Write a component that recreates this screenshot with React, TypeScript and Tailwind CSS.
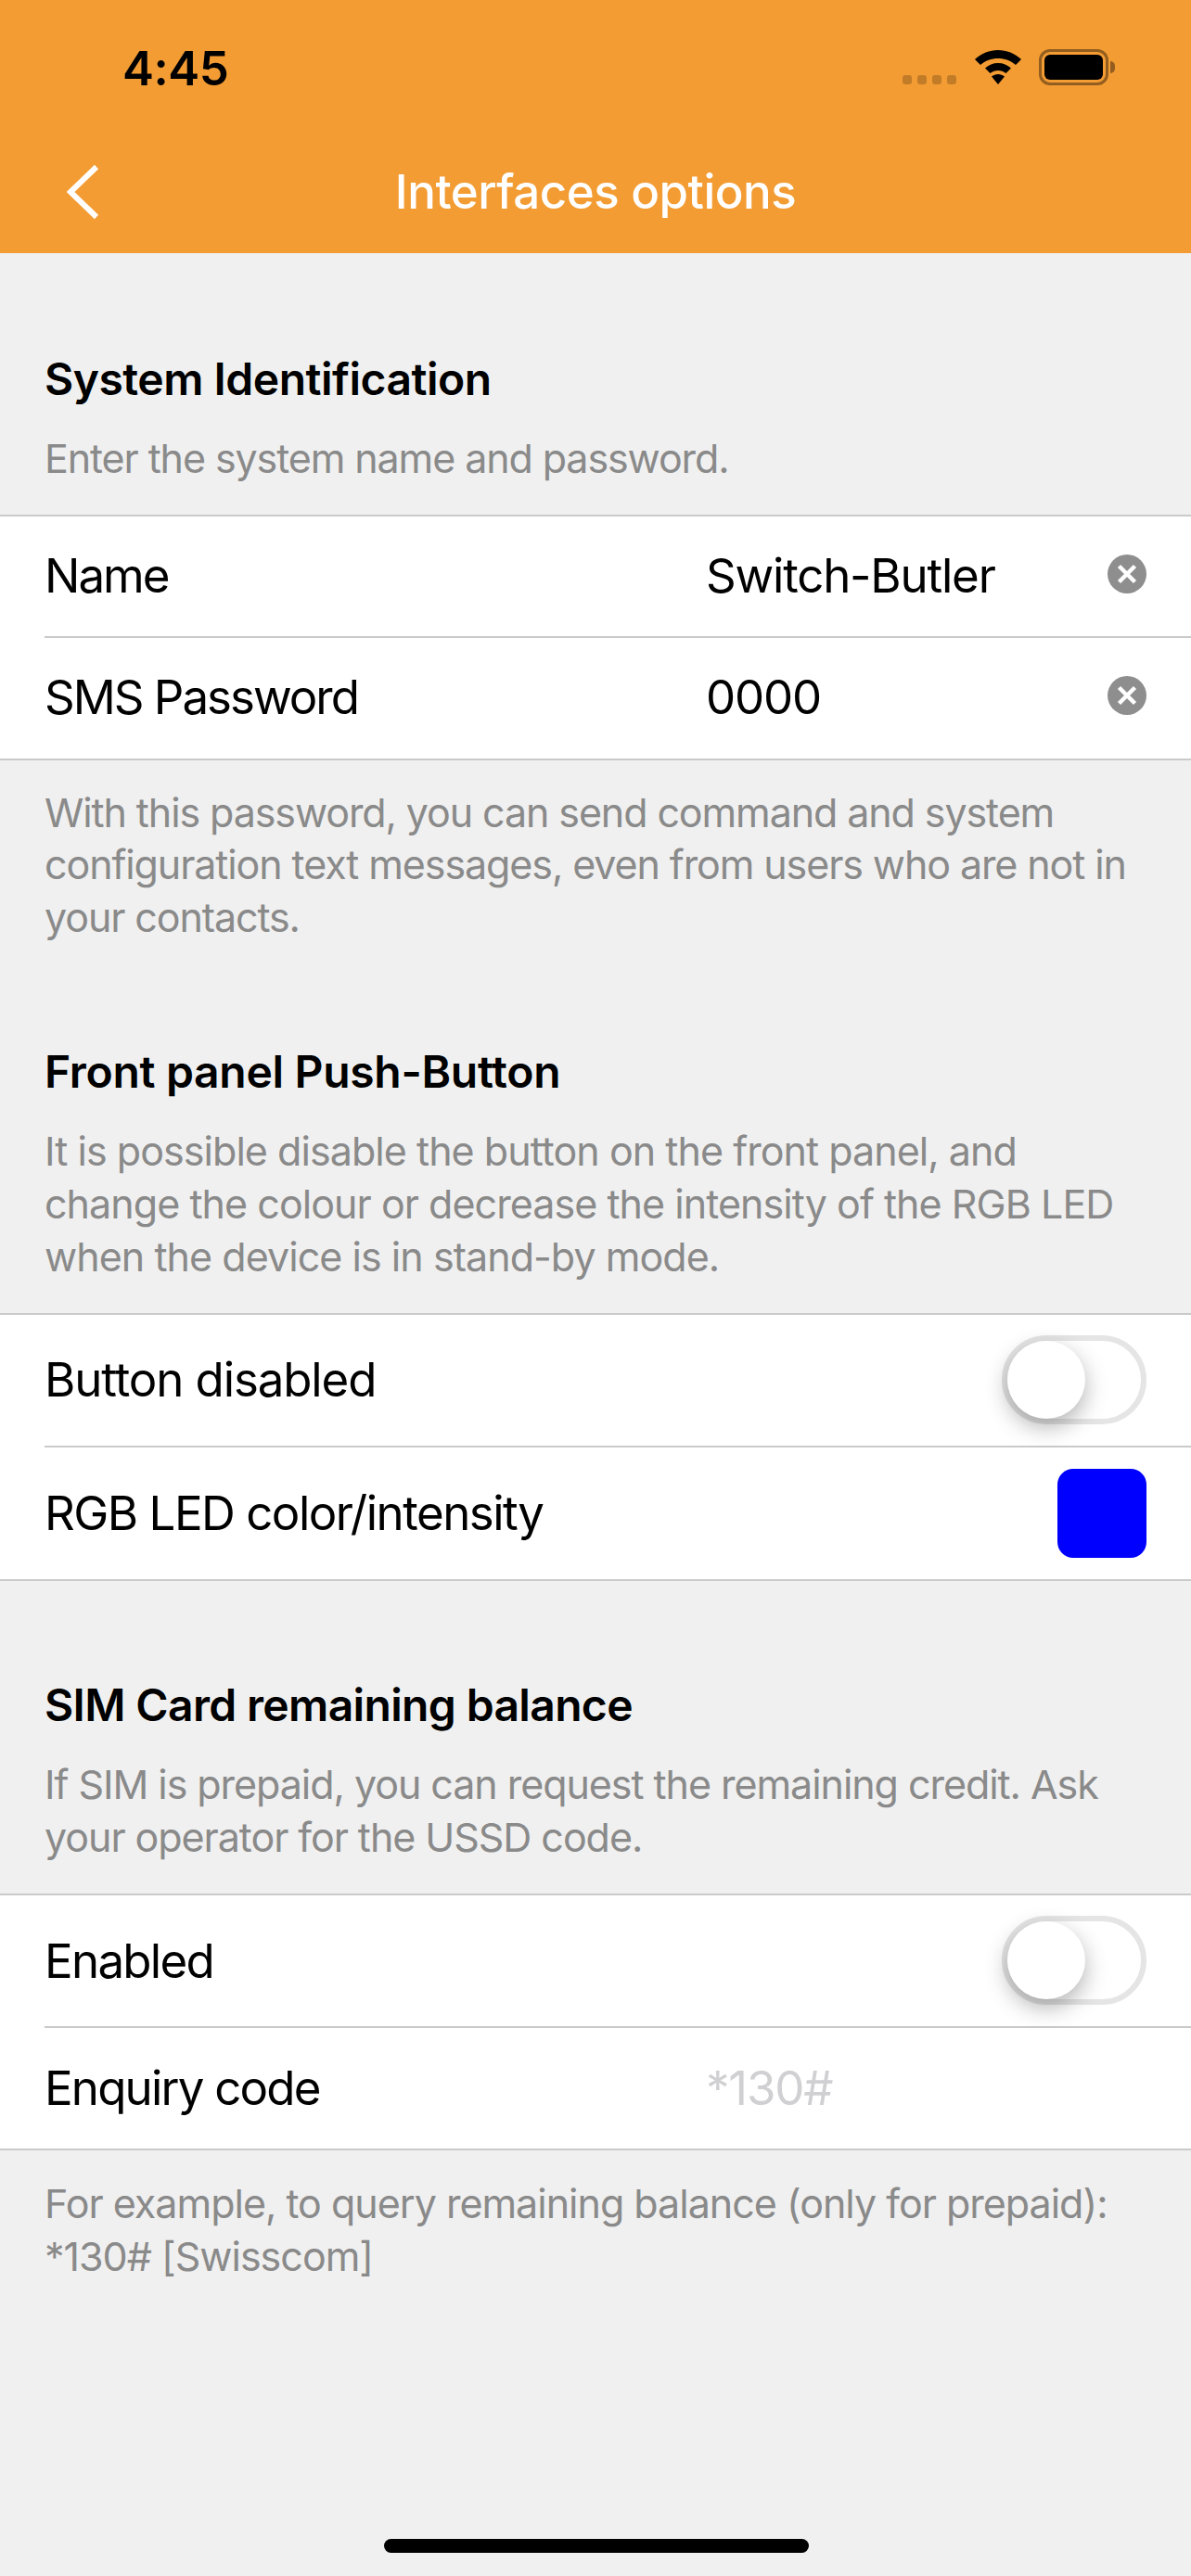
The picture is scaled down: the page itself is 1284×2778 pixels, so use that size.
const font = "font-['Inter','Liberation_Sans',sans-serif]";

function StatusBar() {
  return (
    <div className="flex h-[146px] items-start justify-between pl-[132px] pr-[82px] pt-[44px]">
      <span className="text-[51px] leading-[60px] font-semibold tracking-[-0.5px] text-black">4:45</span>
      <div className="flex items-start pt-[9px]">
        <div className="mt-[28px] flex gap-[6px]">
          {[0, 1, 2, 3].map((i) => (
            <span key={i} className="h-[10px] w-[10px] rounded-[3px] bg-black/20" />
          ))}
        </div>
        <svg className="ml-[19px] mt-[1px]" width="52" height="38" viewBox="0 0 52 38">
          <path d="M26 0C35 0 44 3.500 51 10L45 16C40 11.500 33 9 26 9C19 9 12 11.500 7 16L1 10C8 3.500 17 0 26 0Z" />
          <path d="M26 14C31.500 14 36 16 40 19.500L34.500 25C32 23 29 22 26 22C23 22 20 23 17.500 25L12 19.500C16 16 20.500 14 26 14Z" />
          <path d="M26 26C28.500 26 31 27 33 28.500L26 37L19 28.500C21 27 23.500 26 26 26Z" />
        </svg>
        <div className="ml-[18px] h-[39px] w-[75px] rounded-[12px] border-[3px] border-black/40 p-[3px]">
          <div className="h-full w-full rounded-[6px] bg-black" />
        </div>
        <div className="ml-[2px] mt-[13px] h-[13px] w-[5px] rounded-r-full bg-black/40" />
      </div>
    </div>
  );
}

function NavBar() {
  return (
    <div className="relative flex h-[127px] items-start justify-center pt-[30px]">
      <svg className="absolute left-[69px] top-[31px]" width="38" height="60" viewBox="0 0 38 60">
        <path d="M35 3L7 30L35 57" fill="none" stroke="white" strokeWidth="6" />
      </svg>
      <span className="text-[51px] leading-[62px] font-medium tracking-[-0.5px] text-white">Interfaces options</span>
    </div>
  );
}

function SectionHead({
  title,
  lines,
  titleTracking,
  tracking,
}: {
  title: string;
  lines: string[];
  titleTracking: string;
  tracking: string;
}) {
  return (
    <div className="px-[48px]">
      <div className={`text-[48px] leading-[58px] font-semibold text-black ${titleTracking}`}>{title}</div>
      <div className={`mt-[28px] text-[43px] leading-[56.600px] whitespace-nowrap text-[#8a8a8a] ${tracking}`}>
        {lines.map((l) => (
          <div key={l}>{l}</div>
        ))}
      </div>
    </div>
  );
}

function Note({ lines, tracking }: { lines: string[]; tracking: string }) {
  return (
    <div className={`px-[48px] text-[43px] leading-[56.600px] whitespace-nowrap text-[#8a8a8a] ${tracking}`}>
      {lines.map((l) => (
        <div key={l}>{l}</div>
      ))}
    </div>
  );
}

function Row({ h, children }: { h: string; children: React.ReactNode }) {
  return <div className={`${h} relative flex items-center pl-[48px]`}>{children}</div>;
}

function FieldValue({ value, placeholder }: { value: string; placeholder?: boolean }) {
  return (
    <span className={`absolute left-[761px] ${placeholder ? "text-[#d0d0d2]" : "text-black"}`}>{value}</span>
  );
}

function ClearButton() {
  return (
    <span className="absolute right-[48px] top-[41px] flex h-[42px] w-[42px] items-center justify-center rounded-full bg-[#8e8e8e]">
      <svg width="22" height="22" viewBox="0 0 22 22">
        <path d="M2.500 2.500L19.500 19.500M19.500 2.500L2.500 19.500" stroke="white" strokeWidth="4.500" />
      </svg>
    </span>
  );
}

function Toggle() {
  return (
    <span className="absolute right-[48px] top-[22px] h-[96px] w-[156px] rounded-full border-[6px] border-[#e5e5e5]">
      <span className="absolute left-0 top-0 h-[84px] w-[84px] rounded-full bg-white shadow-[0_9px_24px_rgba(0,0,0,0.3)]" />
    </span>
  );
}

function Divider() {
  return <div className="ml-[48px] h-[2px] bg-[#cacaca]" />;
}

function Rule() {
  return <div className="h-[2px] bg-[#cacaca]" />;
}

export default function App() {
  return (
    <div className={`${font} flex h-[2778px] w-[1284px] flex-col overflow-hidden bg-[#f0f0f0]`}>
      <div className="bg-[#f39c33]">
        <StatusBar />
        <NavBar />
      </div>

      <div className="pt-[107px]">
        <SectionHead
          title="System Identification"
          titleTracking="tracking-[-0.5px]"
          tracking="tracking-[-1.1px]"
          lines={["Enter the system name and password."]}
        />
      </div>
      <div className="mt-[32px]">
        <Rule />
        <div className="bg-white text-[51px] tracking-[-1.2px]">
          <Row h="h-[129px]">
            <span className="tracking-[-2px]">Name</span>
            <FieldValue value="Switch-Butler" />
            <ClearButton />
          </Row>
          <Divider />
          <Row h="h-[130px]">
            <span className="tracking-[-2px]">SMS Password</span>
            <FieldValue value="0000" />
            <ClearButton />
          </Row>
        </div>
        <Rule />
      </div>
      <div className="mt-[28px]">
        <Note
          tracking="tracking-[-1.1px]"
          lines={[
            "With this password, you can send command and system",
            "configuration text messages, even from users who are not in",
            "your contacts.",
          ]}
        />
      </div>

      <div className="mt-[110px]">
        <SectionHead
          title="Front panel Push-Button"
          titleTracking="tracking-[-0.3px]"
          tracking="tracking-[-0.95px]"
          lines={[
            "It is possible disable the button on the front panel, and",
            "change the colour or decrease the intensity of the RGB LED",
            "when the device is in stand-by mode.",
          ]}
        />
      </div>
      <div className="mt-[33px]">
        <Rule />
        <div className="bg-white text-[51px] tracking-[-1.2px]">
          <Row h="h-[141px]">
            <span className="tracking-[-1.1px]">Button disabled</span>
            <Toggle />
          </Row>
          <Divider />
          <Row h="h-[142px]">
            <span className="tracking-[-1.5px]">RGB LED color/intensity</span>
            <span className="absolute right-[48px] top-[23px] h-[96px] w-[96px] rounded-[17px] bg-[#0000ff]" />
          </Row>
        </div>
        <Rule />
      </div>

      <div className="mt-[105px]">
        <SectionHead
          title="SIM Card remaining balance"
          titleTracking="tracking-[-0.65px]"
          tracking="tracking-[-1.05px]"
          lines={[
            "If SIM is prepaid, you can request the remaining credit. Ask",
            "your operator for the USSD code.",
          ]}
        />
      </div>
      <div className="mt-[33px]">
        <Rule />
        <div className="bg-white text-[51px] tracking-[-1.2px]">
          <Row h="h-[141px]">
            <span className="tracking-[-1.7px]">Enabled</span>
            <Toggle />
          </Row>
          <Divider />
          <Row h="h-[130px]">
            <span className="tracking-[-1.8px]">Enquiry code</span>
            <FieldValue value="*130#" placeholder />
          </Row>
        </div>
        <Rule />
      </div>
      <div className="mt-[29px]">
        <Note
          tracking="tracking-[-1px]"
          lines={[
            "For example, to query remaining balance (only for prepaid):",
            "*130# [Swisscom]",
          ]}
        />
      </div>

      <div className="mt-auto mb-[25px] ml-[414px] h-[15px] w-[458px] rounded-full bg-black" />
    </div>
  );
}
